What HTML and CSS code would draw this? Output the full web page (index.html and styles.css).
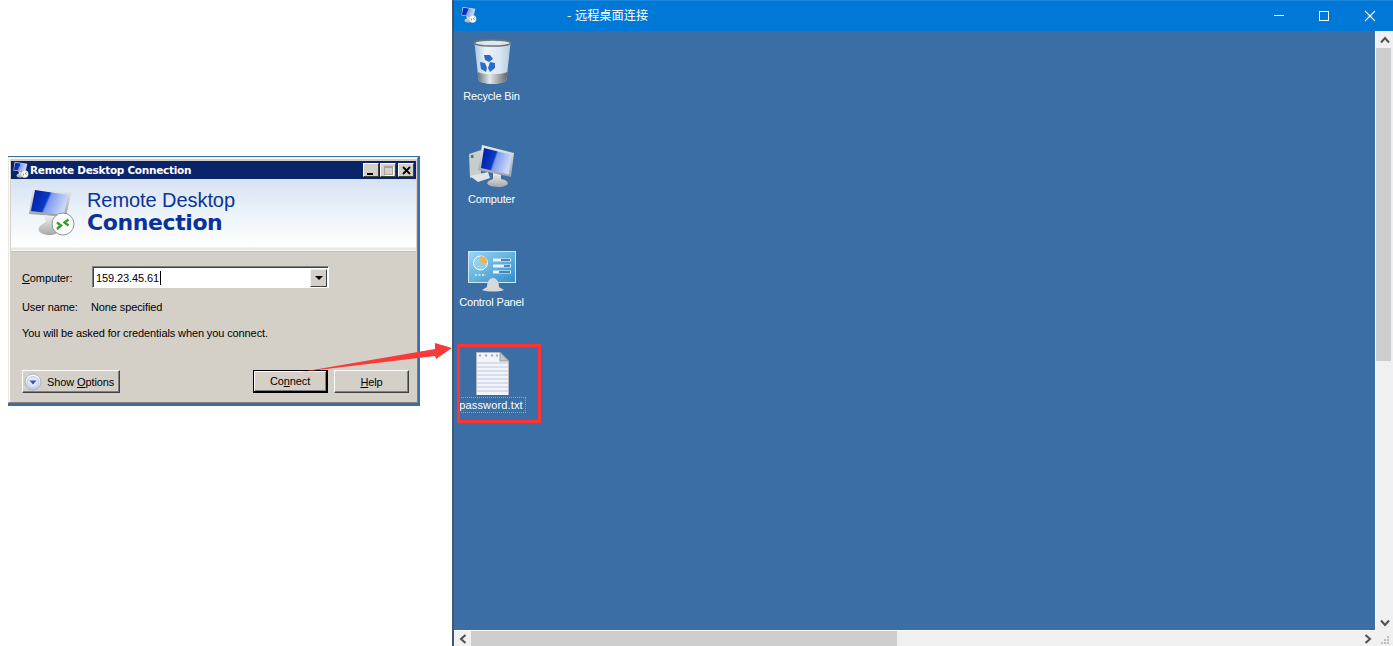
FILE: index.html
```html
<!DOCTYPE html>
<html lang="en">
<head>
<meta charset="utf-8">
<title>Remote Desktop Connection</title>
<link rel="stylesheet" href="styles.css">
</head>
<body>
<svg width="0" height="0" class="defs">
  <defs>
    <linearGradient id="scr" x1="0" y1="0" x2="1" y2="0.3"><stop offset="0" stop-color="#001a9c"/><stop offset="0.5" stop-color="#0a3ac8"/><stop offset="0.56" stop-color="#7d9cf0"/><stop offset="1" stop-color="#c9d6f8"/></linearGradient>
    <linearGradient id="bez" x1="0" y1="0" x2="0" y2="1"><stop offset="0" stop-color="#e8ecee"/><stop offset="1" stop-color="#9aa0a4"/></linearGradient>
    <linearGradient id="base" x1="0" y1="0" x2="0" y2="1"><stop offset="0" stop-color="#f0f0f0"/><stop offset="1" stop-color="#a8a8a8"/></linearGradient>
    <linearGradient id="bin" x1="0" y1="0" x2="1" y2="0"><stop offset="0" stop-color="#a9c6de"/><stop offset="0.3" stop-color="#eaf2f9"/><stop offset="0.7" stop-color="#dbe7f2"/><stop offset="1" stop-color="#b3cbe0"/></linearGradient>
    <linearGradient id="binb" x1="0" y1="0" x2="1" y2="0"><stop offset="0" stop-color="#6e7478"/><stop offset="0.4" stop-color="#e4e6e8"/><stop offset="1" stop-color="#63686c"/></linearGradient>
    <linearGradient id="cp" x1="0" y1="0" x2="1" y2="1"><stop offset="0" stop-color="#9cd6f0"/><stop offset="1" stop-color="#2f8ed2"/></linearGradient>
    <linearGradient id="opt" x1="0" y1="0" x2="0" y2="1"><stop offset="0" stop-color="#ffffff"/><stop offset="1" stop-color="#b9c7e6"/></linearGradient>
    <symbol id="rdp" viewBox="0 0 48 48">
      <path d="M5 0 L43 5 L38 29 L1 26Z" fill="url(#bez)"/>
      <path d="M7 2 L40 7 L36 27 L3 23Z" fill="url(#scr)"/>
      <path d="M16 27 L27 29 L27 34 C35 36 34 47 22 47 C11 47 5 40 18 34Z" fill="url(#base)"/>
      <circle cx="35" cy="36" r="11" fill="#ffffff" stroke="#8e9498" stroke-width="1"/>
      <path d="M29 34.500 L33 37.500 L29 41 M40.500 31.500 L36.500 34.500 L40.500 37.500" fill="none" stroke="#2ea02e" stroke-width="2.400"/>
    </symbol>
  </defs>
</svg>

<section class="dialog">
  <div class="dialog-inner">
    <div class="dlg-title">
      <svg class="dlg-title-icon"><use href="#rdp"/></svg>
      <span class="dlg-title-text">Remote Desktop Connection</span>
      <span class="caps">
        <span class="cap"><i class="cap-min"></i></span>
        <span class="cap cap-off"><i class="cap-max"></i></span>
        <span class="cap cap-close"><svg width="9" height="9" viewBox="0 0 9 9"><path d="M1 1 L8 8 M8 1 L1 8" stroke="#000" stroke-width="1.800"/></svg></span>
      </span>
    </div>
    <div class="banner">
      <svg class="banner-icon"><use href="#rdp"/></svg>
      <div class="banner-text">
        <div class="banner-l1">Remote Desktop</div>
        <div class="banner-l2">Connection</div>
      </div>
    </div>
    <div class="banner-rule"></div>
    <div class="form">
      <div class="row row-computer">
        <span class="lab"><u>C</u>omputer:</span>
        <div class="combo">
          <span class="combo-val">159.23.45.61<i class="caret"></i></span>
          <span class="combo-btn"><i class="tri"></i></span>
        </div>
      </div>
      <div class="row row-user">
        <span class="lab lab-user">User name:</span>
        <span>None specified</span>
      </div>
      <div class="row-note">You will be asked for credentials when you connect.</div>
      <div class="actions">
        <button class="btn btn-opts">
          <svg width="18" height="18" viewBox="0 0 18 18"><circle cx="9" cy="9" r="8" fill="url(#opt)" stroke="#a9b4c6"/><circle cx="9" cy="9" r="5.500" fill="#dfe6f5" stroke="#c2cde2"/><path d="M5.500 7.500 H12.500 L9 11.500Z" fill="#2f55b8"/></svg>
          <span>Show <u>O</u>ptions</span>
        </button>
        <button class="btn btn-connect">Co<u>n</u>nect</button>
        <button class="btn btn-help"><u>H</u>elp</button>
      </div>
    </div>
  </div>
</section>

<section class="rdwin">
  <header class="rd-title">
    <svg class="rd-title-icon"><use href="#rdp"/></svg>
    <span class="rd-title-text">- 远程桌面连接</span>
    <span class="rd-caps">
      <svg width="12" height="12" viewBox="0 0 12 12"><path d="M1 5.500 H11" stroke="#fff"/></svg>
      <svg width="12" height="12" viewBox="0 0 12 12"><rect x="1.500" y="1.500" width="9" height="9" fill="none" stroke="#fff"/></svg>
      <svg width="12" height="12" viewBox="0 0 12 12"><path d="M1 1 L11 11 M11 1 L1 11" stroke="#fff" stroke-width="1.100"/></svg>
    </span>
  </header>
  <div class="rd-mid">
    <div class="desk">
      <div class="ico">
        <svg width="48" height="48" viewBox="0 0 48 48">
          <path d="M6.500 5 L42.500 5 L38.500 42 C36 47 13 47 10.500 42Z" fill="url(#bin)"/>
          <path d="M9.700 34 C16 37 33 37 39.300 34 L38.500 42 C36 47 13 47 10.500 42Z" fill="url(#binb)"/>
          <ellipse cx="24.500" cy="5" rx="18" ry="3" fill="#dfe8ef" stroke="#6d7478" stroke-width="1.500"/>
          <path d="M16 17 L22 17 L25 21 L21 24 L17 22Z M22 24 L27 25 L27 30 L22 34 L20 30Z M12 24 L17 25 L19 30 L18 34 L13 31Z" fill="#2a6bc8"/>
        </svg>
        <span class="ico-lab">Recycle Bin</span>
      </div>
      <div class="ico">
        <svg width="48" height="48" viewBox="0 0 48 48">
          <path d="M1 13 L13 9 L13 34 L2 37Z" fill="#c8cccc"/>
          <rect x="3" y="14" width="2.500" height="3" fill="#3a8a3a"/>
          <path d="M2 35 L20 31 L22 37 L10 41Z" fill="#e0e4e4"/>
          <path d="M14 4 L46 12 L43 36 L10 29Z" fill="url(#bez)"/>
          <path d="M16 7 L43.500 14 L41 33.500 L13 27Z" fill="url(#scr)"/>
          <path d="M25 32 L33 34 L33 38 C43 40 42 46 30 46 C19 46 15 41 25 38Z" fill="url(#base)"/>
        </svg>
        <span class="ico-lab">Computer</span>
      </div>
      <div class="ico">
        <svg width="48" height="48" viewBox="0 0 48 48">
          <rect x="0.500" y="7.500" width="47" height="31" fill="url(#cp)" stroke="#cfe8f6"/>
          <circle cx="12.500" cy="19" r="7" fill="#8fd0ee" stroke="#fff"/>
          <path d="M12.500 12 A7 7 0 0 1 19.500 19 L12.500 19Z" fill="#f5b04c"/>
          <path d="M25 16 H43 M25 22 H43 M25 28 H43" stroke="#eaf6fc" stroke-width="3"/>
          <path d="M33 16 H42 M36 22 H42 M31 28 H42" stroke="#1c5f9a" stroke-width="1.500"/>
          <path d="M7 31 H9 M10.500 31 H12.500 M14 31 H16" stroke="#a8f0f0" stroke-width="2"/>
          <path d="M16 31 H18" stroke="#f0a040" stroke-width="2"/>
          <path d="M14 46 L19 43 C19 37 22 34 25 34 C28 34 31 37 31 43 L36 46 C30 48 20 48 14 46Z" fill="#d8d8d8"/>
        </svg>
        <span class="ico-lab">Control Panel</span>
      </div>
      <div class="ico">
        <svg width="48" height="48" viewBox="0 0 48 48">
          <path d="M8.500 5.500 L32 5.500 L40.500 14 L40.500 48.500 L8.500 48.500Z" fill="#f2f4fa" stroke="#b4b8c0"/>
          <path d="M9 16 H40 M9 20 H40 M9 24 H40 M9 28 H40 M9 32 H40 M9 36 H40 M9 40 H40 M9 44 H40" stroke="#bcc7e4"/>
          <path d="M32 5.500 L32 14 L40.500 14Z" fill="#c4c8cc" stroke="#9a9ea4"/>
          <circle cx="12" cy="8.500" r="1.200" fill="#aab0b8"/><circle cx="18" cy="8.500" r="1.200" fill="#aab0b8"/><circle cx="24" cy="8.500" r="1.200" fill="#aab0b8"/><circle cx="29" cy="8.500" r="1.200" fill="#aab0b8"/>
        </svg>
        <span class="ico-lab ico-sel">password.txt</span>
      </div>
    </div>
    <aside class="vbar">
      <span class="sb-arrow"><svg width="10" height="8" viewBox="0 0 10 8"><path d="M1 6.500 L5 2 L9 6.500" fill="none" stroke="#505050" stroke-width="2"/></svg></span>
      <span class="vthumb"></span>
      <span class="sb-fill"></span>
      <span class="sb-arrow"><svg width="10" height="8" viewBox="0 0 10 8"><path d="M1 1.500 L5 6 L9 1.500" fill="none" stroke="#505050" stroke-width="2"/></svg></span>
    </aside>
  </div>
  <footer class="hbar">
    <span class="sb-arrow-h"><svg width="8" height="10" viewBox="0 0 8 10"><path d="M6.500 1 L2 5 L6.500 9" fill="none" stroke="#505050" stroke-width="2"/></svg></span>
    <span class="hthumb"></span>
    <span class="sb-fill"></span>
    <span class="sb-arrow-h"><svg width="8" height="10" viewBox="0 0 8 10"><path d="M1.500 1 L6 5 L1.500 9" fill="none" stroke="#505050" stroke-width="2"/></svg></span>
    <span class="grip">
      <svg width="10" height="10" viewBox="0 0 10 10"><path d="M7 0h2v2h-2z M4 3h2v2h-2z M7 3h2v2h-2z M1 6h2v2h-2z M4 6h2v2h-2z M7 6h2v2h-2z" fill="#bdbdbd"/></svg>
    </span>
  </footer>
</section>

<svg class="arrow" width="160" height="40" viewBox="0 0 160 40">
  <path d="M1 30 L135 7 L135 1 L152 6 L136 17 L135 14Z" fill="#f93a3a"/>
</svg>
<div class="redbox"></div>
</body>
</html>
```
FILE: styles.css
```css
* { box-sizing: border-box; }
html, body { margin: 0; height: 100%; }
body {
  width: 1393px;
  height: 646px;
  overflow: hidden;
  background: #fff;
  display: flex;
  align-items: flex-start;
  position: relative;
  font-family: "Liberation Sans", Arial, sans-serif;
  font-size: 11px;
  letter-spacing: -0.11px;
  color: #000;
}
.defs { position: absolute; }

/* Left dialog */
.dialog {
  width: 412px;
  height: 250px;
  margin: 156px 0 0 8px;
  border-top: 1px solid #3a6ea5;
  border-right: 2px solid #3a6ea5;
  border-bottom: 3px solid #3a6ea5;
  flex: none;
}
.dialog-inner {
  height: 100%;
  background: #d4d0c8;
  border-top: 1px solid #f0eee8;
  border-left: 1px solid #e8e6e0;
  border-right: 1px solid #808080;
  border-bottom: 1px solid #808080;
  box-shadow: inset 1px 1px 0 #fff;
  padding: 3px 1px 0 2px;
  display: flex;
  flex-direction: column;
}
.dlg-title {
  height: 18px;
  background: #0a246a;
  display: flex;
  align-items: center;
  color: #fff;
  font-family: "DejaVu Sans", sans-serif;
  font-weight: bold;
  font-size: 10.5px;
  padding: 0 2px;
  flex: none;
}
.dlg-title-icon { width: 16px; height: 16px; margin-right: 1px; flex: none; }
.dlg-title-text { flex: 1; letter-spacing: -0.28px; }
.caps { display: flex; gap: 1px; }
.cap {
  width: 16px;
  height: 14px;
  background: #d4d0c8;
  border: 1px solid;
  border-color: #fff #404040 #404040 #fff;
  display: flex;
  align-items: center;
  justify-content: center;
}
.cap-close { margin-left: 1px; }
.cap-min { width: 6px; height: 2px; background: #000; margin-top: 7px; margin-right: 2px; }
.cap-max { width: 9px; height: 9px; border: 1px solid #a8a49c; border-top-width: 2px; box-shadow: 1px 1px 0 #fff; }
.banner {
  height: 68px;
  background: linear-gradient(#d5e3f3 0%, #eef4fb 55%, #fff 100%);
  display: flex;
  flex: none;
}
.banner-icon { width: 48px; height: 48px; margin: 9px 0 0 17px; flex: none; }
.banner-text { margin: 10px 0 0 11px; color: #0a3399; letter-spacing: 0; }
.banner-l1 { font-family: "Liberation Sans", sans-serif; font-size: 20px; line-height: 23px; letter-spacing: -0.07px; }
.banner-l2 { font-family: "DejaVu Sans", sans-serif; font-weight: bold; font-size: 22px; line-height: 22px; letter-spacing: -0.4px; }
.banner-rule {
  height: 5px;
  flex: none;
  background: #e8e8e6;
  border-top: 1px solid #f4f4f2;
  border-bottom: 1px solid #c4c2bc;
  box-shadow: inset 0 -1px 0 #f6f6f4;
}
.form {
  flex: 1;
  padding: 14px 7px 0 11px;
  display: flex;
  flex-direction: column;
}
.row { display: flex; align-items: center; }
.lab { width: 70px; flex: none; }
.lab-user { width: 69px; }
.row-computer { height: 22px; }
.row-computer .lab { padding-top: 1px; }
.combo {
  width: 237px;
  height: 22px;
  background: #fff;
  border: 1px solid;
  border-color: #808080 #fff #fff #808080;
  box-shadow: inset 1px 1px 0 #404040;
  display: flex;
  align-items: center;
  padding: 1px 1px 0 3px;
  justify-content: space-between;
}
.combo-val { display: flex; align-items: center; }
.caret { width: 1px; height: 14px; background: #000; margin-left: 1px; }
.combo-btn {
  width: 17px;
  height: 18px;
  background: #d4d0c8;
  border: 1px solid;
  border-color: #f0eee8 #404040 #404040 #f0eee8;
  display: flex;
  align-items: center;
  justify-content: center;
}
.tri { width: 0; height: 0; border: 4px solid transparent; border-top: 4px solid #000; border-bottom: 0; }
.row-user { margin-top: 10px; height: 18px; }
.row-note { margin-top: 8px; height: 18px; line-height: 18px; }
.actions { margin-top: auto; margin-bottom: 9px; display: flex; height: 23px; }
.btn {
  height: 23px;
  font: inherit;
  letter-spacing: inherit;
  color: #000;
  background: #d4d0c8;
  border: 1px solid;
  border-color: #fff #404040 #404040 #fff;
  box-shadow: inset -1px -1px 0 #808080;
  padding: 0;
  display: flex;
  align-items: center;
  justify-content: center;
}
.btn-opts { width: 98px; gap: 5px; padding-left: 1px; justify-content: flex-start; }
.btn-connect { width: 75px; margin-left: auto; padding-bottom: 1px; border: 2px solid #000; border-top-width: 1px; border-left-width: 1px; box-shadow: inset 1px 1px 0 #fff, inset -1px -1px 0 #808080; }
.btn-help { width: 75px; margin-left: 6px; }

/* Right window */
.rdwin {
  margin-left: auto;
  width: 941px;
  height: 646px;
  border-left: 1px solid #43586f;
  flex: none;
  display: flex;
  flex-direction: column;
  box-shadow: inset 1px 0 0 #43586f;
}
.rd-title {
  height: 31px;
  flex: none;
  background: #0078d7;
  border-top: 1px solid #1a86dc;
  border-left: 1px solid #1a5a94;
  display: flex;
  align-items: center;
  color: #fff;
  font-family: "Noto Sans CJK SC", "Liberation Sans", sans-serif;
  font-size: 12.2px;
  letter-spacing: 0;
  padding-bottom: 3px;
}
.rd-title-icon { width: 16px; height: 16px; margin-left: 7px; flex: none; }
.rd-title-text { margin-left: 90px; flex: 1; word-spacing: 1px; }
.rd-caps { display: flex; gap: 34px; margin-right: 17px; padding-top: 2px; }
.rd-caps svg:first-child { margin-right: -1px; }
.rd-mid { flex: 1; display: flex; min-height: 0; }
.desk {
  flex: 1;
  background: #3a6ea5;
  margin-left: 1px;
  padding-top: 7px;
  border-bottom: 1px solid #fff;
  border-right: 1px solid #fff;
  display: flex;
  flex-direction: column;
}
.ico {
  width: 75px;
  height: 103px;
  flex: none;
  display: flex;
  flex-direction: column;
  align-items: center;
}
.ico-lab {
  margin-top: 3px;
  color: #fff;
  font-size: 11px;
  letter-spacing: -0.15px;
  line-height: 14px;
  white-space: nowrap;
}
.ico-sel { outline: 1px dotted #d09a50; outline-offset: 0; padding: 0 2px 0 1px; letter-spacing: 0.15px; }
.vbar {
  width: 17px;
  flex: none;
  background: #f0f0f0;
  display: flex;
  flex-direction: column;
}
.sb-arrow { height: 17px; flex: none; display: flex; align-items: center; justify-content: center; }
.vthumb { height: 313px; width: 15px; background: #cdcdcd; flex: none; }
.sb-fill { flex: 1; }
.hbar {
  height: 15px;
  flex: none;
  background: #f0f0f0;
  margin-left: 1px;
  display: flex;
  align-items: center;
}
.sb-arrow-h { width: 17px; height: 15px; flex: none; display: flex; align-items: center; justify-content: center; }
.hthumb { width: 426px; height: 15px; background: #cdcdcd; flex: none; }
.grip { width: 17px; flex: none; display: flex; justify-content: center; align-items: flex-end; height: 15px; }

/* Annotations drawn over the screenshot */
.arrow { position: absolute; left: 300px; top: 342px; }
.redbox { position: absolute; left: 457px; top: 344px; width: 84px; height: 79px; border: 3px solid #ff3333; }
```
